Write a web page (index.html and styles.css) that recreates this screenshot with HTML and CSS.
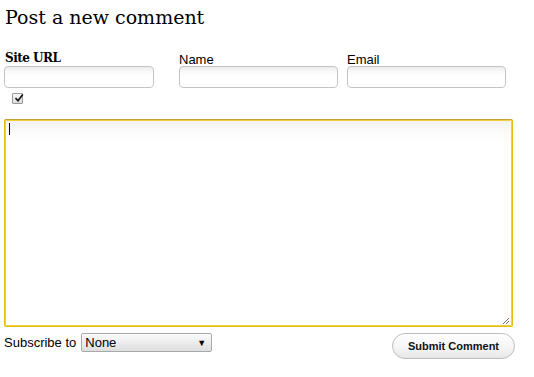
FILE: index.html
```html
<!DOCTYPE html>
<html>
<head>
<meta charset="utf-8">
<link rel="stylesheet" href="styles.css">
</head>
<body>
<div class="wrap">
  <h2 class="title">Post a new comment</h2>
  <div class="fields">
    <div class="field f-url">
      <label class="lbl-serif">Site URL</label>
      <div class="input"></div>
      <div class="check"><svg width="10" height="10" viewBox="0 0 10 10"><path d="M1.5 5 L4 7.8 L8.8 1.5" fill="none" stroke="#111" stroke-width="1.6"/></svg></div>
    </div>
    <div class="field f-name">
      <label class="lbl">Name</label>
      <div class="input"></div>
    </div>
    <div class="field f-email">
      <label class="lbl">Email</label>
      <div class="input"></div>
    </div>
  </div>
  <div class="textarea"><span class="caret"></span><span class="grip"><svg width="8" height="8" viewBox="0 0 8 8"><path d="M1 7 L7 1 M4 7 L7 4" stroke="#777" stroke-width="1"/></svg></span></div>
  <div class="bottom">
    <div class="sub">
      <span class="sub-lbl">Subscribe to</span>
      <div class="select"><span>None</span><span class="arrow">▼</span></div>
    </div>
    <div class="btn">Submit Comment</div>
  </div>
</div>
</body>
</html>
```
FILE: styles.css
```css
html, body { margin: 0; padding: 0; background: #fff; }
body { font-family: "Liberation Sans", Arial, sans-serif; color: #000; }
.wrap { padding: 4px 20px 0 4px; }
.title {
  font-family: "DejaVu Serif", Georgia, serif;
  font-weight: normal;
  font-size: 19px;
  margin: 0 0 0 1px;
  line-height: 26px;
  letter-spacing: 0;
}
.fields { display: flex; margin-top: 20px; height: 69px; }
.field { display: flex; flex-direction: column; position: relative; }
.f-url { width: 175px; }
.f-name { width: 168px; margin-top: 3px; }
.f-email { width: 160px; margin-top: 3px; }
.lbl-serif {
  font-family: "DejaVu Serif", Georgia, serif;
  font-weight: bold;
  font-size: 12px;
  letter-spacing: -0.5px;
  line-height: 16px;
  padding-left: 1px;
}
.lbl { font-size: 13px; line-height: 13px; height: 13px; }
.input {
  height: 20px;
  border: 1px solid #c4c4c4;
  border-radius: 4px;
  background: linear-gradient(#ececec 0, #fafafa 5px, #fff 10px);
}
.f-url .input { width: 148px; }
.f-name .input { width: 157px; }
.f-email .input { width: 157px; }
.check {
  width: 9px; height: 9px;
  border: 1px solid #999;
  background: linear-gradient(#f6f6f6, #dcdcdc);
  margin: 5px 0 0 8px;
  border-radius: 1px;
  position: relative;
}
.check svg { position: absolute; left: 1px; top: -1px; }
.textarea {
  height: 206px;
  width: 507px;
  border: 1px solid #e0be10;
  border-top-color: #c8a22a;
  box-shadow: 0 0 0 1px #f0d040 inset;
  border-radius: 2px;
  background: linear-gradient(#f1f1f1 0, #fbfbfb 12px, #fff 22px);
  position: relative;
}
.caret { position: absolute; left: 4px; top: 3px; width: 1px; height: 12px; background: #000; }
.grip { position: absolute; right: 2px; bottom: 1px; line-height: 0; }
.bottom { display: flex; justify-content: space-between; align-items: flex-start; margin-top: 6px; width: 511px; }
.sub { display: flex; align-items: center; }
.sub-lbl { font-size: 13px; margin-right: 5px; }
.select {
  height: 17px;
  border: 1px solid #a8a8a8;
  border-radius: 2px;
  background: linear-gradient(#fbfbfb, #dedede);
  display: flex; align-items: center; justify-content: space-between;
  font-size: 13px;
  padding: 0 0 0 3px;
  width: 126px;
}
.arrow { font-size: 9px; margin-right: 5px; }
.btn {
  width: 121px; height: 24px;
  border: 1px solid #bdbdbd;
  border-radius: 13px;
  background: linear-gradient(#fff 0, #f4f4f4 60%, #e6e6e6 100%);
  font-weight: bold; font-size: 11px;
  display: flex; align-items: center; justify-content: center;
  color: #111;
}
```
